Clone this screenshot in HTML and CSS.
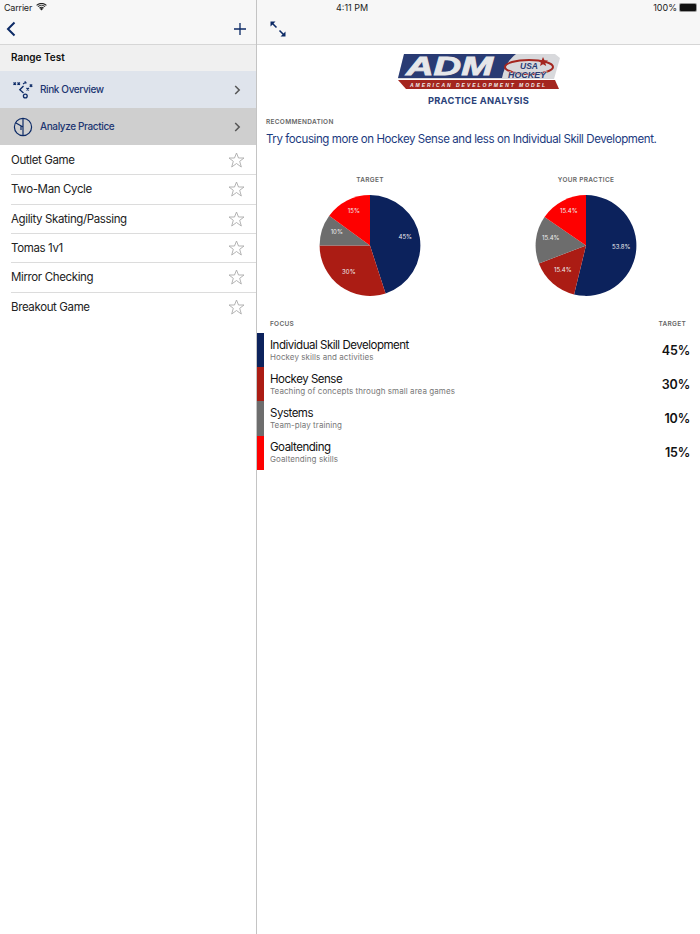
FILE: index.html
```html
<!DOCTYPE html>
<html lang="en">
<head>
<meta charset="utf-8">
<title>Practice Analysis</title>
<link rel="stylesheet" href="styles.css">
</head>
<body>
<div class="app">
  <aside class="side">
    <header class="bar">
      <div class="status"><span>Carrier</span>
        <svg class="wifi" width="11" height="8" viewBox="0 0 14 10"><path d="M7 9.600 4.900 7.200a3 3 0 0 1 4.200 0Z" fill="#222"/><path d="M3.800 6A4.800 4.800 0 0 1 10.200 6l-.8.9a3.700 3.700 0 0 0-4.800 0Z" fill="#222"/><path d="M2 4.100a7.400 7.400 0 0 1 10 0l-.9 1a6 6 0 0 0-8.200 0Z" fill="#222"/><path d="M.3 2.300a10 10 0 0 1 13.400 0l-.9 1a8.600 8.600 0 0 0-11.600 0Z" fill="#222"/></svg>
      </div>
      <div class="tools">
        <svg width="10" height="16" viewBox="0 0 10 16"><path d="M8.500 1.500 2 8l6.500 6.500" fill="none" stroke="#0c2a66" stroke-width="2"/></svg>
        <svg width="14" height="14" viewBox="0 0 14 14"><path d="M7 1v12M1 7h12" fill="none" stroke="#0c2a66" stroke-width="1.300"/></svg>
      </div>
    </header>
    <h2 class="group">Range Test</h2>
    <a class="nav nav-blue">
      <span class="nav-icon"><svg width="20" height="18" viewBox="0 0 20 18"><g fill="none" stroke="#0c2a66" stroke-width="1.300"><path d="M.5 1.500l2.400 2.400M2.900 1.500.5 3.900M4.500 1.500l2.400 2.400M6.900 1.500 4.500 3.900M16.800 3.500l2.400 2.400M19.200 3.500l-2.400 2.400M13.500 7l2.400 2.400M15.900 7l-2.400 2.400"/><path d="M10 3 13 1M13 1 11.500.7M13 1 12.800 2.600" stroke-width="1.100"/><path d="M10.500 5 6.800 8.800 10.500 12"/><circle cx="12.300" cy="15" r="1.900"/></g></svg></span>
      <span class="nav-label">Rink Overview</span>
      <svg class="chev" width="7" height="10" viewBox="0 0 7 10"><path d="M1.200 1 5.200 5l-4 4" fill="none" stroke="#555" stroke-width="1.500"/></svg>
    </a>
    <a class="nav nav-grey">
      <span class="nav-icon"><svg width="20" height="20" viewBox="0 0 20 20"><g fill="none" stroke="#0c2a66" stroke-width="1.200"><circle cx="10" cy="10" r="8.600"/><path d="M10 1.400V18.600M10 10 3 6M8 8.900V13"/></g></svg></span>
      <span class="nav-label">Analyze Practice</span>
      <svg class="chev" width="7" height="10" viewBox="0 0 7 10"><path d="M1.200 1 5.200 5l-4 4" fill="none" stroke="#555" stroke-width="1.500"/></svg>
    </a>
    <ul class="drills">
      <li class="drill"><span>Outlet Game</span><svg class="star" width="17" height="16" viewBox="0 0 17 16"><use href="#star"/></svg></li>
      <li class="drill"><span>Two-Man Cycle</span><svg class="star" width="17" height="16" viewBox="0 0 17 16"><use href="#star"/></svg></li>
      <li class="drill"><span>Agility Skating/Passing</span><svg class="star" width="17" height="16" viewBox="0 0 17 16"><use href="#star"/></svg></li>
      <li class="drill"><span>Tomas 1v1</span><svg class="star" width="17" height="16" viewBox="0 0 17 16"><use href="#star"/></svg></li>
      <li class="drill"><span>Mirror Checking</span><svg class="star" width="17" height="16" viewBox="0 0 17 16"><use href="#star"/></svg></li>
      <li class="drill"><span>Breakout Game</span><svg class="star" width="17" height="16" viewBox="0 0 17 16"><use href="#star"/></svg></li>
    </ul>
    <svg class="defs" width="0" height="0"><defs><path id="star" d="M8.500 1 10.500 6H16L11.700 9.300 13.300 15 8.500 11.500 3.700 15 5.300 9.300 1 6H6.500Z" fill="none" stroke="#aaa" stroke-width=".9"/></defs></svg>
  </aside>
  <main class="detail">
    <header class="bar">
      <div class="status status-main"><span class="time">4:11 PM</span><span class="batt">100%<i class="cell"></i></span></div>
      <div class="tools">
        <svg width="16" height="16" viewBox="0 0 16 16"><path d="M.5 .5h5L.5 5.500ZM15.500 15.500H10.500L15.500 10.500Z" fill="#0c2a66"/><path d="M2.500 2.500 6.500 6.500M13.500 13.500 9.500 9.500" stroke="#0c2a66" stroke-width="1.600"/></svg>
      </div>
    </header>
    <div class="brand">
      <svg class="logo" width="164" height="38" viewBox="0 0 164 38">
        <path d="M7 1H158L163 5 157 26H1Z" fill="#d8d9dc"/>
        <path d="M7 1H119C110 8 107 16 105 25H1Z" fill="#293b73"/>
        <text x="9" y="22" class="logo-adm" textLength="87" lengthAdjust="spacingAndGlyphs">ADM</text>
        <path d="M1 27H158L162 36H9Z" fill="#a4261f"/>
        <text x="13" y="34" class="logo-sub" textLength="136">AMERICAN DEVELOPMENT MODEL</text>
        <ellipse cx="132" cy="14" rx="24" ry="7" fill="none" stroke="#a4261f" stroke-width="2"/>
        <path d="M146 4l1.500 3.200 3.500.3-2.700 2.200.9 3.300-3.200-1.800-3 1.800.9-3.300-2.700-2.200 3.500-.3Z" fill="#a4261f"/>
        <text x="123" y="16" class="logo-usa">USA</text>
        <text x="111" y="25" class="logo-hk" textLength="38" lengthAdjust="spacingAndGlyphs">HOCKEY</text>
      </svg>
      <h1 class="title">PRACTICE ANALYSIS</h1>
    </div>
    <section class="rec">
      <h3 class="cap">RECOMMENDATION</h3>
      <p class="rec-text">Try focusing more on Hockey Sense and less on Individual Skill Development.</p>
    </section>
    <section class="charts">
      <figure class="chart">
        <figcaption class="cap">TARGET</figcaption>
        <svg class="pie" width="102" height="102" viewBox="-50.600 -50.100 101.200 101.200">
          <path d="M0 0V-50A50 50 0 0 1 15.450 47.550Z" fill="#0c225c"/>
          <path d="M0 0L15.450 47.550A50 50 0 0 1-50 0Z" fill="#ab1c14"/>
          <path d="M0 0H-50A50 50 0 0 1-40.450-29.390Z" fill="#6d6d6d"/>
          <path d="M0 0L-40.450-29.390A50 50 0 0 1 0-50Z" fill="#fe0000"/>
          <g class="pie-label"><text x="35" y="-6">45%</text><text x="-21" y="28">30%</text><text x="-33" y="-11">10%</text><text x="-16" y="-32">15%</text></g>
        </svg>
      </figure>
      <figure class="chart">
        <figcaption class="cap">YOUR PRACTICE</figcaption>
        <svg class="pie" width="102" height="102" viewBox="-50.600 -50.100 101.200 101.200">
          <path d="M0 0V-50A50 50 0 1 1-11.830 48.580Z" fill="#0c225c"/>
          <path d="M0 0L-11.830 48.580A50 50 0 0 1-46.720 17.820Z" fill="#ab1c14"/>
          <path d="M0 0L-46.720 17.820A50 50 0 0 1-41.170-28.370Z" fill="#6d6d6d"/>
          <path d="M0 0L-41.170-28.370A50 50 0 0 1 0-50Z" fill="#fe0000"/>
          <g class="pie-label"><text x="35" y="3">53.8%</text><text x="-23" y="26">15.4%</text><text x="-35" y="-5">15.4%</text><text x="-17" y="-32">15.4%</text></g>
        </svg>
      </figure>
    </section>
    <section class="focus">
      <div class="focus-head cap"><span>FOCUS</span><span>TARGET</span></div>
      <div class="focus-row c-navy"><div><div class="f-name">Individual Skill Development</div><div class="f-sub">Hockey skills and activities</div></div><b class="f-val">45%</b></div>
      <div class="focus-row c-dark"><div><div class="f-name">Hockey Sense</div><div class="f-sub">Teaching of concepts through small area games</div></div><b class="f-val">30%</b></div>
      <div class="focus-row c-grey"><div><div class="f-name">Systems</div><div class="f-sub">Team-play training</div></div><b class="f-val">10%</b></div>
      <div class="focus-row c-red"><div><div class="f-name">Goaltending</div><div class="f-sub">Goaltending skills</div></div><b class="f-val">15%</b></div>
    </section>
  </main>
</div>
</body>
</html>
```
FILE: styles.css
```css
* { box-sizing: border-box; }
html, body { margin: 0; padding: 0; }
body { font-family: Inter, "Liberation Sans", sans-serif; color: #111; background: #fff; }
.app { display: flex; width: 700px; height: 934px; overflow: hidden; }
.side { width: 257px; flex: none; border-right: 1px solid #c4c4c4; }
.detail { flex: 1; min-width: 0; }
.bar { height: 45px; background: #f7f7f7; border-bottom: 1px solid #d6d6d6; display: flex; flex-direction: column; }
.status { height: 14px; display: flex; align-items: center; gap: 4px; padding-left: 4px; font-size: 9px; color: #222; letter-spacing: -.2px; }
.status-main { justify-content: space-between; padding: 0 3px 0 79px; letter-spacing: 0; }
.batt { display: flex; align-items: center; gap: 3px; }
.cell { display: block; width: 16px; height: 7px; background: #111; border-radius: 1px; box-shadow: 0 0 0 1px #999; margin-right: 1px; }
.tools { flex: 1; display: flex; align-items: center; justify-content: space-between; padding: 0 9px 0 6px; }
.detail .tools { padding-left: 13px; }
.group { margin: 0; height: 26px; background: #f0f0f0; font-size: 10px; font-weight: 600; line-height: 24px; padding-left: 11px; color: #111; }
.nav { display: flex; align-items: center; height: 37px; padding-right: 15px; font-size: 10px; font-weight: 500; color: #1c3672; letter-spacing: -.38px; }
.nav-blue { background: #dfe4ec; }
.nav-grey { background: #cfcfcf; }
.nav-icon { width: 40px; padding-left: 13px; display: flex; align-items: center; flex: none; }
.nav-label { flex: 1; line-height: 35px; height: 36px; }
.chev { flex: none; }
.drills { list-style: none; margin: 0; padding: 1px 0 0 11px; }
.drill { height: 29.33px; display: flex; align-items: center; justify-content: space-between; padding-right: 11px; font-size: 11.500px; letter-spacing: -.37px; color: #222; border-bottom: 1px solid #dcdcdc; }
.drill:last-child { border-bottom: 0; }
.star { flex: none; }
.defs { position: absolute; }
.brand { display: flex; flex-direction: column; align-items: center; padding-top: 8px; }
.logo { display: block; }
.logo-adm { font: italic 700 25px "Liberation Sans", sans-serif; fill: #e6e7e9; stroke: #e6e7e9; stroke-width: .8px; }
.logo-sub { font: italic 700 5px "Liberation Sans", sans-serif; fill: #eee; letter-spacing: 1px; }
.logo-usa { font: italic 700 8.500px "Liberation Sans", sans-serif; fill: #293b73; paint-order: stroke; stroke: #d8d9dc; stroke-width: 1px; }
.logo-hk { font: italic 700 9px "Liberation Sans", sans-serif; fill: #293b73; paint-order: stroke; stroke: #d8d9dc; stroke-width: 1px; }
.title { margin: 4px 0 0; font-size: 9.300px; font-weight: 700; color: #2b4279; letter-spacing: .3px; line-height: 12px; }
.cap { margin: 0; font-size: 6.500px; font-weight: 600; color: #666; letter-spacing: .3px; }
.rec { padding: 10px 9px 0; }
.rec .cap { line-height: 10px; }
.rec-text { margin: 4px 0 0; font-size: 11.500px; line-height: 16px; color: #1b3a80; white-space: nowrap; letter-spacing: -.41px; }
.charts { display: flex; padding: 28px 0 0 62px; gap: 114px; }
.chart { margin: 0; width: 102px; display: flex; flex-direction: column; align-items: center; }
.chart .cap { line-height: 10px; margin-bottom: 10px; white-space: nowrap; }
.pie { display: block; }
.pie-label text { font-size: 6px; fill: #eee; text-anchor: middle; }
.focus { margin-top: 22px; }
.focus-head { display: flex; justify-content: space-between; padding: 0 14px 0 13px; line-height: 10px; height: 14px; }
.focus-row { height: 34.200px; display: flex; justify-content: space-between; align-items: center; padding: 0 10px 0 6px; border-left: 7px solid; }
.c-navy { border-color: #0c225c; }
.c-dark { border-color: #ab1c14; }
.c-grey { border-color: #6d6d6d; }
.c-red { border-color: #fe0000; }
.f-name { font-size: 11.500px; line-height: 13px; color: #111; letter-spacing: -.48px; }
.f-sub { font-size: 8px; line-height: 10px; color: #777; letter-spacing: .07px; }
.f-val { font-size: 12.500px; font-weight: 600; color: #111; letter-spacing: -.2px; }
```
